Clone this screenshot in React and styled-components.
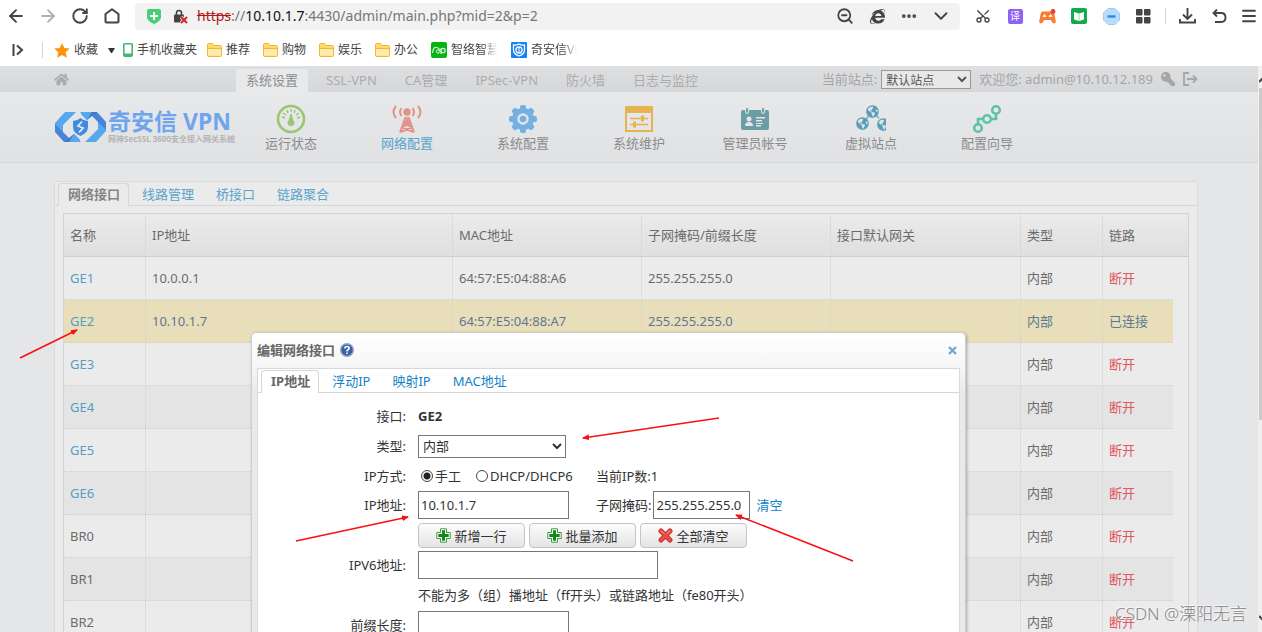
import React, { useState } from "react";
import styled, { createGlobalStyle, css } from "styled-components";
import {
  ArrowLeft,
  ArrowRight,
  ChevronDown,
  Ellipsis,
  Menu,
  RotateCw,
  Scissors,
  ZoomOut,
} from "lucide-react";
import { FaHome, FaInternetExplorer, FaKey, FaGlobeAmericas } from "react-icons/fa";

const GlobalStyle = createGlobalStyle`
  * {
    box-sizing: border-box;
  }
  body {
    margin: 0;
    overflow: hidden;
    font-family: "Noto Sans", "Noto Sans CJK SC", sans-serif;
    font-size: 13px;
    line-height: 18px;
    color: #333;
  }
  button, input, select {
    font: inherit;
    color: inherit;
  }
  a {
    text-decoration: none;
  }
  svg {
    display: block;
    flex: none;
  }
`;

/* ---------- browser chrome ---------- */

const Browser = styled.div`
  display: flex;
  flex-direction: column;
  height: 100vh;
  position: relative;
  overflow: hidden;
`;

const Toolbar = styled.div`
  display: flex;
  align-items: center;
  height: 32px;
  flex: none;
  background: #fff;
`;

const ToolButton = styled.button`
  display: flex;
  align-items: center;
  justify-content: center;
  flex: none;
  width: ${(p) => p.$width || 32}px;
  height: 26px;
  padding: 0;
  border: 0;
  background: none;
  color: ${(p) => (p.$muted ? "#b0b0b0" : "#444")};
`;

const AddressBar = styled.div`
  display: flex;
  align-items: center;
  flex: 1;
  min-width: 0;
  height: 27px;
  margin: 0 7px;
  padding: 0 3px 0 12px;
  border-radius: 4px;
  background: #f2f2f2;
`;

const Url = styled.div`
  flex: 1;
  margin-left: 9px;
  font-size: 14px;
  white-space: nowrap;
  color: #777;

  s {
    color: #b01818;
  }
  b {
    font-weight: 400;
    color: #111;
  }
`;

const LockIcon = styled.svg`
  margin-left: 12px;
`;

const Divider = styled.div`
  width: 1px;
  height: 16px;
  margin: 0 ${(p) => p.$right}px 0 ${(p) => p.$left}px;
  background: #d4d4d4;
`;

const Translate = styled.span`
  width: 15px;
  height: 15px;
  border-radius: 2px;
  background: #8f62f5;
  color: #fff;
  font-size: 10px;
  line-height: 15px;
  text-align: center;
`;

const ScissorsIcon = styled(Scissors)`
  rotate: -90deg;
`;

const Bookmarks = styled.nav`
  display: flex;
  align-items: center;
  flex: none;
  height: 34px;
  padding: 2px 0 0 12px;
  background: #fff;
  font-size: 12px;
`;

const Bookmark = styled.a`
  display: flex;
  align-items: center;
  gap: 4px;
  margin-right: ${(p) => p.$after || 13}px;
  color: #444;
  white-space: nowrap;

  span {
    ${(p) =>
      p.$fade &&
      css`
        width: 46px;
        overflow: hidden;
        mask-image: linear-gradient(90deg, #000 70%, transparent);
      `}
  }
`;

const Caret = styled.i`
  width: 7px;
  margin: 0 8px 0 0;
  border: 3px solid transparent;
  border-top: 5px solid #333;
  border-bottom: 0;
`;

/* ---------- page ---------- */

const Viewport = styled.div`
  display: flex;
  flex: 1;
  min-height: 0;
`;

const Page = styled.div`
  flex: 1;
  min-width: 0;
  overflow: hidden;
  background: #e5e6e8;
`;

const ScrollTrack = styled.div`
  display: flex;
  flex-direction: column;
  width: 4px;
  padding: 11px 0 11px 1px;
  overflow: hidden;
  background: #f0f0f0;
`;

const ScrollThumb = styled.div`
  height: 332px;
  margin: 5px 0 auto;
  background: #cbcbcb;
`;

const TopBar = styled.div`
  display: flex;
  align-items: center;
  height: 26px;
  padding: 0 60px 0 54px;
  background: linear-gradient(#dedfe1, #d6d7d9);
  color: #a5a5a6;
`;

const HomeLink = styled.a`
  width: 182px;
  color: #a9aaab;
`;

const ModuleTabs = styled.nav`
  display: flex;
  align-self: flex-end;
  gap: 8px;
  flex: 1;
`;

const ModuleTab = styled.a`
  height: 23px;
  padding: 0 10px;
  line-height: 23px;
  border-radius: 3px 3px 0 0;
  white-space: nowrap;
  color: ${(p) => (p.$active ? "#8d8d8e" : "#abacad")};
  background: ${(p) => (p.$active ? "#e8e9ea" : "none")};
`;

const Session = styled.div`
  display: flex;
  align-items: center;
  gap: 8px;
  white-space: nowrap;

  label {
    display: flex;
    align-items: center;
    gap: 4px;
  }
  select {
    width: 90px;
    height: 19px;
    padding: 0;
    border: 1px solid #999;
    border-radius: 0;
    background: #e8e8e8;
    color: #555;
    font-size: 12px;
  }
`;

const KeyIcon = styled(FaKey)`
  transform: scaleX(-1);
`;

const Header = styled.header`
  display: flex;
  height: 71px;
  padding-left: 55px;
  border-bottom: 1px solid #d6d7d9;
  background: linear-gradient(#e8e9ea, #e0e1e3);
`;

const Brand = styled.a`
  display: flex;
  align-items: center;
  gap: 2px;
  width: 178px;
  color: #6fa4ee;
  white-space: nowrap;
`;

const BrandName = styled.div`
  font-size: 23px;
  font-weight: 700;
  line-height: 24px;
`;

const BrandNote = styled.div`
  font-size: 8px;
  font-weight: 700;
  line-height: 12px;
  color: #b4b5b7;
`;

const MainNav = styled.nav`
  display: flex;
`;

const NavItem = styled.a`
  display: flex;
  flex-direction: column;
  align-items: center;
  width: 116px;
  padding-top: 12px;
  color: ${(p) => (p.$active ? "#58a3cc" : "#8b8b8c")};
`;

const Panel = styled.main`
  margin: 18px 60px 0 54px;
  border: 1px solid #d9dadb;
  border-radius: 3px;
  background: #ebebeb;
`;

const Tabs = styled.div`
  display: flex;
  align-items: flex-end;
  gap: 3px;
  height: 24px;
  padding-left: 3px;
  border-bottom: 1px solid ${(p) => p.$line};
`;

const Tab = styled.button`
  height: 23px;
  margin-bottom: -1px;
  padding: 0 8px 2px 9px;
  border: 1px solid transparent;
  border-bottom: 0;
  border-radius: 4px 4px 0 0;
  background: none;
  line-height: 18px;
  color: ${(p) => p.$link};

  ${(p) =>
    p.$active &&
    css`
      border-color: ${p.$line};
      background: ${p.$fill};
      color: ${p.$text};
      font-weight: 700;
    `}
`;

const TableWrap = styled.div`
  margin: 7px 8px;
  border: 1px solid #d2d2d2;
`;

const Table = styled.table`
  width: 100%;
  table-layout: fixed;
  border-collapse: separate;
  border-spacing: 0;
  color: #6b6b6b;

  th,
  td {
    height: 43px;
    padding: 0 6px;
    text-align: left;
    font-weight: 400;
    border-bottom: 1px dotted #cfcfcf;
    border-right: 1px dotted #cfcfcf;
  }
  th {
    border-bottom-style: solid;
    background: linear-gradient(#ebebeb, #dfdfdf);
  }
  th:last-child {
    border-right: 0;
  }
  td:nth-last-child(2) {
    border-right: 0;
  }
  td:last-child {
    border: 0;
    background: #ebebeb;
  }
  a {
    color: #559dc6;
  }
`;

const Row = styled.tr`
  background: ${(p) => (p.$selected ? "#e8dfba" : p.$striped ? "#e4e4e4" : "#ebebeb")};
  color: ${(p) => (p.$selected ? "#5b7893" : "inherit")};
`;

const Down = styled.span`
  color: #e0575f;
`;

/* ---------- dialog ---------- */

const Dialog = styled.section`
  position: absolute;
  top: 332px;
  left: 251px;
  width: 715px;
  height: 420px;
  padding: 0 5px;
  border: 1px solid #cfcfcf;
  border-radius: 5px;
  background: linear-gradient(#fff, #f5f5f5 36px, #e9e9e9 60px);
  box-shadow: 1px 1px 3px rgba(0, 0, 0, 0.3);
`;

const DialogTitle = styled.header`
  display: flex;
  align-items: center;
  height: 35px;
  padding: 0 3px 1px 0;
  color: #666;
  font-weight: 700;

  h2 {
    margin: 0 5px 0 0;
    font-size: 13px;
  }
`;

const CloseButton = styled.button`
  margin-left: auto;
  padding: 0;
  border: 0;
  background: none;
`;

const DialogBody = styled.div`
  height: 100%;
  border: 1px solid #d9d9d9;
  background: #fff;
`;

const Form = styled.form`
  display: flex;
  flex-direction: column;
  padding-top: 8px;
`;

const FormRow = styled.div`
  display: flex;
  align-items: center;
  height: ${(p) => p.$height}px;
  margin-bottom: ${(p) => p.$after || 0}px;
`;

const FormLabel = styled.label`
  width: 148px;
  margin-right: 12px;
  text-align: right;
`;

const FieldSlot = styled.div`
  display: flex;
  align-items: center;
  width: 178px;
`;

const Field = styled.input`
  width: ${(p) => p.$width}px;
  height: 28px;
  padding: 0 2px;
  border: 1px solid #767676;
  background: #fff;
`;

const TypeSelect = styled.select`
  width: 148px;
  height: 23px;
  padding: 0;
  border: 1px solid #767676;
  border-radius: 0;
  background: #fff;
`;

const Choice = styled.label`
  display: flex;
  align-items: center;
  gap: 2px;
  margin-right: 12px;
  white-space: nowrap;
`;

const Radio = styled.input`
  appearance: none;
  width: 12px;
  height: 12px;
  margin: 0 0 0 3px;
  border: 1px solid #444;
  border-radius: 50%;

  &:checked {
    background: radial-gradient(#222 3px, transparent 4px);
  }
`;

const ActionBar = styled.div`
  display: flex;
  gap: 4px;
`;

const ActionButton = styled.button`
  display: flex;
  align-items: center;
  justify-content: center;
  gap: 3px;
  width: 107px;
  height: 25px;
  padding: 0;
  border: 1px solid #c4c4c4;
  border-radius: 4px;
  background: linear-gradient(#fcfcfc, #e4e4e4);
`;

const ClearLink = styled.a`
  margin-left: 4px;
  color: #1482c5;
`;

const Pointers = styled.svg`
  position: absolute;
  top: 0;
  left: 0;
  pointer-events: none;
`;

const Watermark = styled.div`
  position: absolute;
  right: 15px;
  bottom: 6px;
  font-size: 17px;
  font-weight: 300;
  line-height: 24px;
  color: #858585;
  text-shadow: -1px -1px 0 #f8f8f8;
`;

/* ---------- icons ---------- */

const FolderIcon = () => (
  <svg width="15" height="14" viewBox="0 0 15 14">
    <path d="M.5 12.500V1.500q0-1 1-1h4l1.500 2h6.500q1 0 1 1v9q0 1-1 1h-12q-1 0-1-1z" fill="#ffd865" stroke="#eeb43c" />
    <path d="M1 5.500h13v7H1z" fill="#ffedb0" />
    <path d="M1 5.500h13" stroke="#eeb43c" />
  </svg>
);

const LogoMark = () => (
  <svg width="51" height="30" viewBox="0 0 51 30">
    {[0, 180].map((a) => (
      <g key={a} transform={`rotate(${a} 25.5 15)`}>
        <path d="M10 0h11L8 13v8l-8-1V11z" fill="#55a8ee" />
        <path d="M0 12l18 18H9L0 20z" fill="#4a84d9" />
        <path d="M9 30l10-8 6 6-2 2z" fill="#4275cc" />
        <path d="M14 30l5-8 7 8z" fill="#55a8ee" />
      </g>
    ))}
    <path d="M18 9q4 0 7.500-3 3.500 3 7.500 3v6q0 6-7.500 9-7.500-3-7.500-9z" fill="#3e8be0" />
    <path d="M27 9.500L23 14l5 2-4 4.500" fill="none" stroke="#e6e9ee" strokeWidth="1.800" />
  </svg>
);

const GaugeIcon = () => (
  <svg width="30" height="30" viewBox="0 0 30 30" fill="none" stroke="#9ac673">
    <circle cx="15" cy="15" r="13" strokeWidth="2.600" />
    <path d="M6 13l3 1M7 9l3 2M11 6l1 3M15 5v3M19 6l-1 3M23 9l-3 2M24 13l-3 1" strokeWidth="1.400" />
    <path d="M15 10l2 6.500a3 3 0 1 1-4 0z" fill="#9ac673" />
  </svg>
);

const AntennaIcon = () => (
  <svg width="30" height="30" viewBox="0 0 30 30" fill="none" stroke="#e39385" strokeWidth="2">
    <circle cx="15" cy="8" r="3.700" fill="#e39385" stroke="none" />
    <path d="M9.500 4q-3 4 0 8M20.500 4q3 4 0 8M4 2q-5 6 0 12M26 2q5 6 0 12" />
    <path d="M13.500 13L8 28.500M16.500 13L22 28.500M12 19h6M10.500 23l8-4M19.500 23l-8-4M8.500 28l12-5M21.500 28l-12-5" />
    <path d="M15 12l3 8h-6z" fill="#e39385" stroke="none" />
  </svg>
);

const GearIcon = () => (
  <svg width="30" height="30" viewBox="0 0 30 30">
    <g fill="#74b0e2">
      {[0, 45, 90, 135].map((a) => (
        <rect key={a} x="12" y="1" width="6" height="28" rx="2" transform={`rotate(${a} 15 15)`} />
      ))}
      <circle cx="15" cy="15" r="11" />
    </g>
    <circle cx="15" cy="15" r="4.500" fill="none" stroke="#e4e5e7" strokeWidth="2.400" />
  </svg>
);

const SlidersIcon = () => (
  <svg width="30" height="30" viewBox="0 0 30 30" stroke="#e7b250" fill="none" strokeWidth="2">
    <path d="M2 3h26v24H2z" />
    <path d="M2 2h26v7H2z" fill="#e7b250" stroke="none" />
    <path d="M6 14.500h18M6 20.500h18" strokeWidth="1.600" />
    <path d="M18.500 11.500v6M10.500 17.500v6" strokeWidth="3" />
  </svg>
);

const CardIcon = () => (
  <svg width="30" height="30" viewBox="0 0 30 30" fill="#6b9da5">
    <rect x="1" y="6" width="28" height="20" rx="2" />
    <rect x="5.500" y="3.500" width="3" height="6" rx="1.500" stroke="#e4e5e7" />
    <rect x="21.500" y="3.500" width="3" height="6" rx="1.500" stroke="#e4e5e7" />
    <g fill="#e4e5e7">
      <circle cx="9" cy="15" r="2.500" />
      <path d="M5 22q0-4 4-4t4 4z" />
      <path d="M16 13h9v1.500h-9zM16 16h6v1.500h-6zM16 19h7v1H16zM16 21h5v1.500h-5z" />
    </g>
  </svg>
);

const GlobesIcon = () => (
  <svg width="30" height="30" viewBox="0 0 30 30" color="#5a9fba">
    <path d="M10 16l6-10 10 12" fill="none" stroke="#7fb3c8" strokeWidth="1.500" />
    <g fill="#e4e5e7">
      <circle cx="16" cy="7" r="5" />
      <circle cx="8.500" cy="21.500" r="7" />
      <circle cx="25" cy="18" r="4" />
    </g>
    <FaGlobeAmericas x="10" y="1" width="12" height="12" />
    <FaGlobeAmericas x="0" y="13" width="17" height="17" />
    <FaGlobeAmericas x="21" y="14" width="9" height="9" />
  </svg>
);

const NodesIcon = () => (
  <svg width="30" height="30" viewBox="0 0 30 30" fill="none" stroke="#5fc2a8" strokeWidth="2.600">
    <circle cx="24" cy="6" r="3.800" />
    <circle cx="15" cy="15" r="3.800" />
    <circle cx="6" cy="24" r="3.800" />
    <path d="M6 20v-5h5M19 15h5v-5" />
  </svg>
);

const LogoutIcon = () => (
  <svg width="15" height="14" viewBox="0 0 15 14" fill="none" stroke="#a5a6a7" strokeWidth="1.800">
    <path d="M6 1H1v12h5M4 7h9M10 3.500L13.500 7 10 10.500" />
  </svg>
);

const HelpIcon = () => (
  <svg width="14" height="14" viewBox="0 0 14 14" fill="none">
    <circle cx="7" cy="7" r="6.300" fill="#3b62a0" stroke="#8fa5c8" strokeWidth="1.400" />
    <path d="M4.800 5.500Q5 3.500 7 3.500t2.200 1.700Q9.200 6.300 7 7.500v1M7 9.600v1.500" stroke="#fff" strokeWidth="1.600" />
  </svg>
);

const PlusIcon = () => (
  <svg width="15" height="15" viewBox="0 0 15 15">
    <path d="M4.500 .8h6v3.700h3.700v6h-3.700v3.700h-6v-3.700H.8v-6h3.700z" fill="#fff" stroke="#3f9a42" />
    <path d="M6 2.300h3V6h3.700v3H9v3.700H6V9H2.300V6H6z" fill="#148a1c" />
  </svg>
);

const CrossIcon = () => (
  <svg width="15" height="15" viewBox="0 0 15 15">
    <path d="M3 3l9 9M12 3l-9 9" stroke="#c4332e" strokeWidth="5" strokeLinecap="round" />
    <path d="M3 3l9 9M12 3l-9 9" stroke="#ef4a44" strokeWidth="3" strokeLinecap="round" />
    <path d="M3 2.500l3 3M12 2.500l-3 3" stroke="#f9b0ac" />
  </svg>
);

const ScrollArrow = ({ down }) => (
  <svg width="6" height="6" viewBox="0 0 6 6" fill="none" stroke="#444" strokeWidth="2">
    <path d={down ? "M0 1l3 3 3-3" : "M0 5l3-3 3 3"} />
  </svg>
);

/* ---------- data ---------- */

const modules = ["系统设置", "SSL-VPN", "CA管理", "IPSec-VPN", "防火墙", "日志与监控"];

const navItems = [
  { label: "运行状态", Icon: GaugeIcon },
  { label: "网络配置", Icon: AntennaIcon },
  { label: "系统配置", Icon: GearIcon },
  { label: "系统维护", Icon: SlidersIcon },
  { label: "管理员帐号", Icon: CardIcon },
  { label: "虚拟站点", Icon: GlobesIcon },
  { label: "配置向导", Icon: NodesIcon },
];

const pageTabs = ["网络接口", "线路管理", "桥接口", "链路聚合"];
const dialogTabs = ["IP地址", "浮动IP", "映射IP", "MAC地址"];

const columns = ["名称", "IP地址", "MAC地址", "子网掩码/前缀长度", "接口默认网关", "类型"];

const interfaces = [
  { name: "GE1", ip: "10.0.0.1", mac: "64:57:E5:04:88:A6", mask: "255.255.255.0" },
  { name: "GE2", ip: "10.10.1.7", mac: "64:57:E5:04:88:A7", mask: "255.255.255.0", up: true },
  { name: "GE3" },
  { name: "GE4" },
  { name: "GE5" },
  { name: "GE6" },
  { name: "BR0", bridge: true },
  { name: "BR1", bridge: true },
  { name: "BR2", bridge: true },
];

const pageTheme = { $line: "#d6d7d8", $fill: "#ebebeb", $text: "#858585", $link: "#5ba3cb" };
const dialogTheme = { $line: "#d5d5d5", $fill: "#fff", $text: "#666", $link: "#1482c5" };

const TabStrip = ({ items, theme }) => {
  const [current, setCurrent] = useState(items[0]);

  return (
    <Tabs $line={theme.$line} role="tablist">
      {items.map((item) => (
        <Tab
          key={item}
          type="button"
          role="tab"
          aria-selected={item === current}
          $active={item === current}
          {...theme}
          onClick={() => setCurrent(item)}
        >
          {item}
        </Tab>
      ))}
    </Tabs>
  );
};

const BrowserToolbar = () => (
  <Toolbar>
    <ToolButton aria-label="back"><ArrowLeft size={20} strokeWidth={2.3} /></ToolButton>
    <ToolButton aria-label="forward" $muted><ArrowRight size={20} strokeWidth={2.3} /></ToolButton>
    <ToolButton aria-label="reload"><RotateCw size={18} strokeWidth={2.5} /></ToolButton>
    <ToolButton aria-label="home">
      <svg width="16" height="16" viewBox="0 0 16 16" fill="none" stroke="currentColor" strokeWidth="2" strokeLinejoin="round">
        <path d="M1.500 6L8 1.200 14.500 6v7.500q0 1-1 1h-11q-1 0-1-1z" />
      </svg>
    </ToolButton>
    <AddressBar>
      <svg width="14" height="16" viewBox="0 0 14 16">
        <path d="M2 1h10q2 0 2 2v6q0 4-7 7-7-3-7-7V3q0-2 2-2z" fill="#46cf76" />
        <path d="M7 4v8M3 8h8" stroke="#fff" strokeWidth="2" />
      </svg>
      <LockIcon width="15" height="15" viewBox="0 0 15 15">
        <path d="M3.500 6V4q0-2.500 2.500-2.500T8.500 4v2" fill="none" stroke="#444" strokeWidth="1.600" />
        <rect x="1" y="5.500" width="10" height="8" rx="1" fill="#444" />
        <path d="M8 8l6 6M14 8l-6 6" stroke="#f2f2f2" strokeWidth="3.500" />
        <path d="M8 8l6 6M14 8l-6 6" stroke="#d02020" strokeWidth="1.800" />
      </LockIcon>
      <Url>
        <s>https</s>://<b>10.10.1.7</b>:4430/admin/main.php?mid=2&amp;p=2
      </Url>
      <ToolButton aria-label="zoom"><ZoomOut size={18} strokeWidth={2.4} /></ToolButton>
      <ToolButton aria-label="engine"><FaInternetExplorer size={15} /></ToolButton>
      <ToolButton aria-label="more"><Ellipsis size={18} strokeWidth={3} /></ToolButton>
      <ToolButton aria-label="history"><ChevronDown size={22} /></ToolButton>
    </AddressBar>
    <ToolButton aria-label="cut"><ScissorsIcon size={16} /></ToolButton>
    <ToolButton aria-label="translate"><Translate>译</Translate></ToolButton>
    <ToolButton aria-label="games">
      <svg width="17" height="15" viewBox="0 0 17 15">
        <path d="M4 2.500h9q2 0 2.500 3l1.300 7q0 2-2 2-1 0-3-3.500H5.200Q3.200 14.500 2 14.500q-1.800 0-1.800-2l1.300-7q.5-3 2.500-3z" fill="#fa7c2c" />
        <path d="M4 7.500l1.500-2L7 7.500zM10 7.500l1.500-2L13 7.500z" fill="#fff" stroke="#fff" />
        <circle cx="14" cy="2.500" r="2.400" fill="#f43a3a" />
      </svg>
    </ToolButton>
    <ToolButton aria-label="reader">
      <svg width="16" height="16" viewBox="0 0 16 16">
        <rect width="16" height="16" rx="2" fill="#10ab4c" />
        <path d="M3 4l5 1.500L13 4v7.500L8 13l-5-1.500z" fill="#fff" />
        <path d="M8 5v8" stroke="#9cdcb4" />
      </svg>
    </ToolButton>
    <ToolButton aria-label="block">
      <svg width="17" height="17" viewBox="0 0 17 17">
        <path d="M5 .5h7L16.500 5v7L12 16.500H5L.5 12V5z" fill="#b9dcfb" stroke="#9accf6" />
        <path d="M4.500 8.500h8" stroke="#2f86ea" strokeWidth="2.400" />
      </svg>
    </ToolButton>
    <ToolButton aria-label="extensions">
      <svg width="15" height="15" viewBox="0 0 15 15" fill="#444">
        <rect x="0" y="0" width="6.500" height="6.500" rx="1" />
        <rect x="8" y="0" width="6.500" height="6.500" rx="1" />
        <rect x="0" y="8" width="6.500" height="6.500" rx="1" />
        <rect x="8" y="8" width="6.500" height="6.500" rx="1" />
      </svg>
    </ToolButton>
    <Divider $left={6} $right={5} />
    <ToolButton aria-label="download">
      <svg width="17" height="16" viewBox="0 0 17 16" fill="none" stroke="#444" strokeWidth="1.900">
        <path d="M8.500 0v10.500M4 6.500L8.500 11 13 6.500M1 11v3.500h15V11" />
      </svg>
    </ToolButton>
    <ToolButton aria-label="undo">
      <svg width="15" height="15" viewBox="0 0 15 15" fill="none" stroke="#444" strokeWidth="1.900">
        <path d="M5 .5L1.500 4 5 7.500M1.500 4H9q4.500 0 4.500 4.500T9 13H3" />
      </svg>
    </ToolButton>
    <ToolButton aria-label="menu" $width={27}><Menu size={18} strokeWidth={2.4} /></ToolButton>
  </Toolbar>
);

const BookmarkBar = () => (
  <Bookmarks>
    <svg width="12" height="12" viewBox="0 0 12 12" fill="none" stroke="#444" strokeWidth="2">
      <path d="M1.500 0v12M5 1.500L10 6l-5 4.500" />
    </svg>
    <Divider $left={18} $right={11} />
    <Bookmark href="#" $after={10}>
      <svg width="16" height="15" viewBox="0 0 16 15">
        <path d="M8 0l2.300 5 5.500.6-4.100 3.700 1.200 5.500L8 12l-4.900 2.800 1.200-5.500L.2 5.600 5.700 5z" fill="#fc9410" />
      </svg>
      <span>收藏</span>
    </Bookmark>
    <Caret />
    <Bookmark href="#" $after={10}>
      <svg width="10" height="14" viewBox="0 0 10 14">
        <rect x=".8" y=".8" width="8.400" height="12.400" rx="1" fill="#fff" stroke="#3fba6e" strokeWidth="1.600" />
        <path d="M1 10.500h8V13H1z" fill="#3fba6e" />
      </svg>
      <span>手机收藏夹</span>
    </Bookmark>
    {["推荐", "购物", "娱乐", "办公"].map((name) => (
      <Bookmark href="#" key={name}>
        <FolderIcon />
        <span>{name}</span>
      </Bookmark>
    ))}
    <Bookmark href="#" $fade $after={14}>
      <svg width="16" height="16" viewBox="0 0 16 16">
        <rect width="16" height="16" rx="2" fill="#06b415" />
        <path d="M1.500 11Q2 5 5.500 5.500T8 9" fill="none" stroke="#d4f5d4" strokeWidth="1.200" />
        <circle cx="12" cy="8.500" r="2.200" fill="none" stroke="#d4f5d4" strokeWidth="1.200" />
        <circle cx="7" cy="9.500" r="1.700" fill="none" stroke="#d4f5d4" />
        <path d="M10 6.500V12" stroke="#d4f5d4" strokeWidth="1.200" />
      </svg>
      <span>智络智慧</span>
    </Bookmark>
    <Bookmark href="#" $fade>
      <svg width="16" height="16" viewBox="0 0 16 16" fill="none" stroke="#fff">
        <rect width="16" height="16" rx="1" fill="#1583f2" stroke="none" />
        <path d="M2.500 3q3 .5 5.500-1 2.500 1.500 5.500 1v5q0 4-5.500 6-5.500-2-5.500-6z" strokeWidth="1.300" />
        <circle cx="8" cy="8" r="3" strokeWidth="1.300" />
        <path d="M8 6v4" />
      </svg>
      <span>奇安信VPN</span>
    </Bookmark>
  </Bookmarks>
);

const InterfaceTable = () => (
  <TableWrap>
    <Table>
      <colgroup>
        <col width="82" />
        <col />
        <col width="189" />
        <col width="189" />
        <col width="190" />
        <col width="82" />
        <col width="70" />
        <col width="15" />
      </colgroup>
      <thead>
        <tr>
          {columns.map((name) => (
            <th key={name}>{name}</th>
          ))}
          <th colSpan={2}>链路</th>
        </tr>
      </thead>
      <tbody>
        {interfaces.map((item, i) => (
          <Row key={item.name} $selected={item.up} $striped={i % 2 === 1}>
            <td>{item.bridge ? item.name : <a href="#">{item.name}</a>}</td>
            <td>{item.ip}</td>
            <td>{item.mac}</td>
            <td>{item.mask}</td>
            <td />
            <td>内部</td>
            <td>{item.up ? "已连接" : <Down>断开</Down>}</td>
            <td />
          </Row>
        ))}
      </tbody>
    </Table>
  </TableWrap>
);

const EditDialog = () => (
  <Dialog role="dialog" aria-labelledby="dialog-title">
    <DialogTitle>
      <h2 id="dialog-title">编辑网络接口</h2>
      <HelpIcon />
      <CloseButton aria-label="close">
        <svg width="9" height="9" viewBox="0 0 9 9">
          <path d="M1 1l7 7M8 1L1 8" stroke="#76a3d4" strokeWidth="2.200" />
        </svg>
      </CloseButton>
    </DialogTitle>
    <DialogBody>
      <TabStrip items={dialogTabs} theme={dialogTheme} />
      <Form>
        <FormRow $height={30}>
          <FormLabel as="span">接口:</FormLabel>
          <strong>GE2</strong>
        </FormRow>
        <FormRow $height={30}>
          <FormLabel htmlFor="type">类型:</FormLabel>
          <TypeSelect id="type">
            <option>内部</option>
          </TypeSelect>
        </FormRow>
        <FormRow $height={30}>
          <FormLabel as="span">IP方式:</FormLabel>
          <FieldSlot>
            <Choice>
              <Radio type="radio" name="mode" defaultChecked />
              手工
            </Choice>
            <Choice>
              <Radio type="radio" name="mode" />
              DHCP/DHCP6
            </Choice>
          </FieldSlot>
          <span>当前IP数:1</span>
        </FormRow>
        <FormRow $height={28} $after={4}>
          <FormLabel htmlFor="ip">IP地址:</FormLabel>
          <FieldSlot>
            <Field id="ip" $width={151} defaultValue="10.10.1.7" />
          </FieldSlot>
          <Choice as="span">
            <label htmlFor="mask">子网掩码:</label>
            <Field id="mask" $width={97} defaultValue="255.255.255.0" />
            <ClearLink href="#">清空</ClearLink>
          </Choice>
        </FormRow>
        <FormRow $height={25} $after={3}>
          <FormLabel as="span" />
          <ActionBar>
            <ActionButton type="button"><PlusIcon />新增一行</ActionButton>
            <ActionButton type="button"><PlusIcon />批量添加</ActionButton>
            <ActionButton type="button"><CrossIcon />全部清空</ActionButton>
          </ActionBar>
        </FormRow>
        <FormRow $height={28}>
          <FormLabel htmlFor="ipv6">IPV6地址:</FormLabel>
          <Field id="ipv6" $width={240} />
        </FormRow>
        <FormRow $height={32}>
          <FormLabel as="span" />
          <span>不能为多（组）播地址（ff开头）或链路地址（fe80开头）</span>
        </FormRow>
        <FormRow $height={28}>
          <FormLabel htmlFor="prefix">前缀长度:</FormLabel>
          <Field id="prefix" $width={151} />
        </FormRow>
      </Form>
    </DialogBody>
  </Dialog>
);

const App = () => (
  <Browser>
    <GlobalStyle />
    <BrowserToolbar />
    <BookmarkBar />
    <Viewport>
      <Page>
        <TopBar>
          <HomeLink href="#" aria-label="首页"><FaHome size={15} /></HomeLink>
          <ModuleTabs>
            {modules.map((name, i) => (
              <ModuleTab href="#" key={name} $active={i === 0}>{name}</ModuleTab>
            ))}
          </ModuleTabs>
          <Session>
            <label>
              当前站点:
              <select>
                <option>默认站点</option>
              </select>
            </label>
            <span>欢迎您: admin@10.10.12.189</span>
            <KeyIcon size={14} />
            <LogoutIcon />
          </Session>
        </TopBar>
        <Header>
          <Brand href="#">
            <LogoMark />
            <div>
              <BrandName>奇安信 VPN</BrandName>
              <BrandNote>网神SecSSL 3600安全接入网关系统</BrandNote>
            </div>
          </Brand>
          <MainNav>
            {navItems.map(({ label, Icon }) => (
              <NavItem href="#" key={label} $active={label === "网络配置"}>
                <Icon />
                {label}
              </NavItem>
            ))}
          </MainNav>
        </Header>
        <Panel>
          <TabStrip items={pageTabs} theme={pageTheme} />
          <InterfaceTable />
        </Panel>
      </Page>
      <ScrollTrack>
        <ScrollArrow />
        <ScrollThumb />
        <ScrollArrow down />
      </ScrollTrack>
    </Viewport>
    <EditDialog />
    <Pointers width="1262" height="632" viewBox="0 0 1262 632">
      <defs>
        <marker id="tip" markerUnits="userSpaceOnUse" markerWidth="8" markerHeight="6" refX="6" refY="3" orient="auto">
          <path d="M0 0l7 3-7 3z" fill="#fb1010" />
        </marker>
      </defs>
      <g stroke="#fb1010" strokeWidth="1.600">
        <path d="M20 358L77 330" markerEnd="url(#tip)" />
        <path d="M719 418L583 438" markerEnd="url(#tip)" />
        <path d="M296 541L408 517" markerEnd="url(#tip)" />
        <path d="M853 561L736 515" markerEnd="url(#tip)" />
      </g>
    </Pointers>
    <Watermark>CSDN @溧阳无言</Watermark>
  </Browser>
);

export default App;
